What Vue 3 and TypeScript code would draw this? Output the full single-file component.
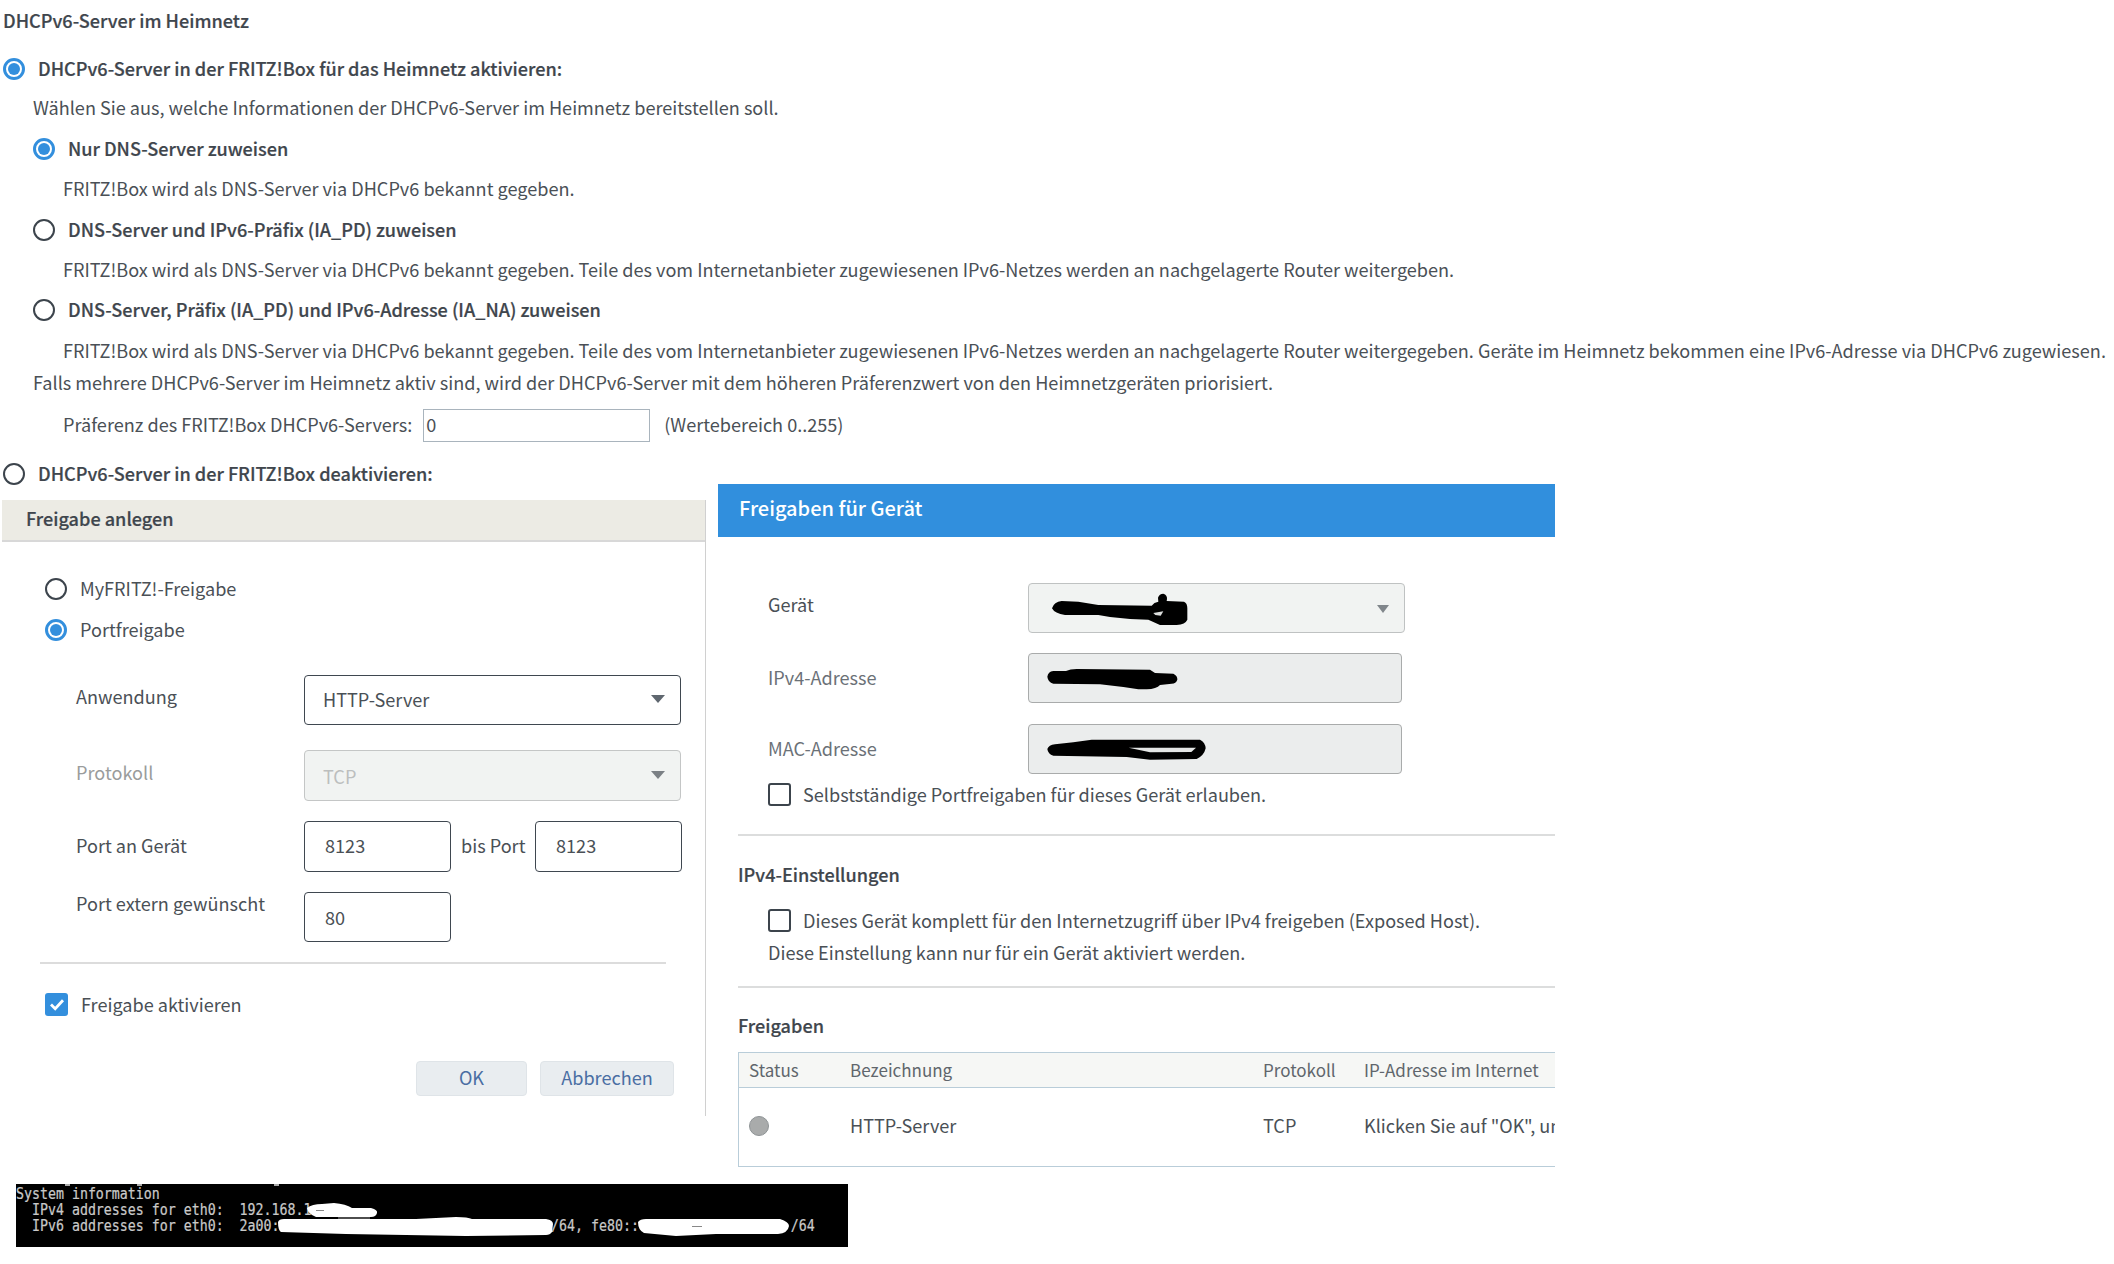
<script setup lang="ts">
const terminalLines: string[] = [
  'System information',
  '  IPv4 addresses for eth0:  192.168.1',
  '  IPv6 addresses for eth0:  2a00:' + ' '.repeat(34) + '/64, fe80::' + ' '.repeat(19) + '/64',
]
</script>

<template>
  <main class="page">
    <section class="top">
      <div class="row title strong">DHCPv6-Server im Heimnetz</div>
      <label class="row g23 strong"><span class="radio on"></span><span class="lbl">DHCPv6-Server in der FRITZ!Box für das Heimnetz aktivieren:</span></label>
      <div class="row g15 i1">Wählen Sie aus, welche Informationen der DHCPv6-Server im Heimnetz bereitstellen soll.</div>
      <label class="row g17 i1 strong"><span class="radio on"></span><span class="lbl">Nur DNS-Server zuweisen</span></label>
      <div class="row g16 i2">FRITZ!Box wird als DNS-Server via DHCPv6 bekannt gegeben.</div>
      <label class="row g17 i1 strong"><span class="radio"></span><span class="lbl">DNS-Server und IPv6-Präfix (IA_PD) zuweisen</span></label>
      <div class="row g16 i2">FRITZ!Box wird als DNS-Server via DHCPv6 bekannt gegeben. Teile des vom Internetanbieter zugewiesenen IPv6-Netzes werden an nachgelagerte Router weitergeben.</div>
      <label class="row g16 i1 strong"><span class="radio"></span><span class="lbl">DNS-Server, Präfix (IA_PD) und IPv6-Adresse (IA_NA) zuweisen</span></label>
      <div class="row g17 i2">FRITZ!Box wird als DNS-Server via DHCPv6 bekannt gegeben. Teile des vom Internetanbieter zugewiesenen IPv6-Netzes werden an nachgelagerte Router weitergegeben. Geräte im Heimnetz bekommen eine IPv6-Adresse via DHCPv6 zugewiesen.</div>
      <div class="row g8 i1">Falls mehrere DHCPv6-Server im Heimnetz aktiv sind, wird der DHCPv6-Server mit dem höheren Präferenzwert von den Heimnetzgeräten priorisiert.</div>
      <div class="row g18 i2 pref">
        <span class="pref-text">Präferenz des FRITZ!Box DHCPv6-Servers:</span>
        <span class="pref-input">0</span>
        <span class="pref-text">(Wertebereich 0..255)</span>
      </div>
      <label class="row g25 strong"><span class="radio"></span><span class="lbl">DHCPv6-Server in der FRITZ!Box deaktivieren:</span></label>
    </section>

    <section class="panels">
      <div class="left">
        <header class="left-head strong">Freigabe anlegen</header>
        <div class="left-body">
          <label class="row opt"><span class="radio"></span><span class="lbl">MyFRITZ!-Freigabe</span></label>
          <label class="row opt opt2"><span class="radio on"></span><span class="lbl">Portfreigabe</span></label>

          <div class="form-row r-app">
            <span class="flabel up4">Anwendung</span>
            <div class="box wide"><span>HTTP-Server</span><i class="caret"></i></div>
          </div>
          <div class="form-row r-proto">
            <span class="flabel up4 muted">Protokoll</span>
            <div class="box wide tall disabled"><span class="tcp">TCP</span><i class="caret"></i></div>
          </div>
          <div class="form-row r-port">
            <span class="flabel up2">Port an Gerät</span>
            <div class="box small">8123</div>
            <span class="bis">bis Port</span>
            <div class="box small">8123</div>
          </div>
          <div class="form-row r-ext">
            <span class="flabel up14">Port extern gewünscht</span>
            <div class="box small ext">80</div>
          </div>

          <div class="hr"></div>

          <label class="row opt activate"><span class="check on"><svg viewBox="0 0 22 22" width="22" height="22"><path d="M5 11.5l4.2 4.2L17 7.2" fill="none" stroke="#fff" stroke-width="2.8" /></svg></span><span class="lbl">Freigabe aktivieren</span></label>

          <div class="buttons">
            <button class="btn ok" type="button">OK</button>
            <button class="btn cancel" type="button">Abbrechen</button>
          </div>
        </div>
      </div>

      <div class="right">
        <header class="right-head">Freigaben für Gerät</header>

        <div class="dev-row d1">
          <span class="dlabel">Gerät</span>
          <div class="dbox sel"><i class="caret"></i></div>
        </div>
        <div class="dev-row d2">
          <span class="dlabel grey">IPv4-Adresse</span>
          <div class="dbox ro"></div>
        </div>
        <div class="dev-row d3">
          <span class="dlabel grey">MAC-Adresse</span>
          <div class="dbox ro"></div>
        </div>
        <label class="row chk c1"><span class="check"></span><span class="clbl">Selbstständige Portfreigaben für dieses Gerät erlauben.</span></label>

        <div class="rhr hr1"></div>
        <div class="row sect s1 strong">IPv4-Einstellungen</div>
        <label class="row chk c2"><span class="check"></span><span class="clbl">Dieses Gerät komplett für den Internetzugriff über IPv4 freigeben (Exposed Host).</span></label>
        <div class="row note">Diese Einstellung kann nur für ein Gerät aktiviert werden.</div>
        <div class="rhr hr2"></div>
        <div class="row sect s2 strong">Freigaben</div>

        <div class="table">
          <div class="thead">
            <span class="c-status">Status</span>
            <span class="c-name">Bezeichnung</span>
            <span class="c-proto">Protokoll</span>
            <span class="c-ip">IP-Adresse im Internet</span>
          </div>
          <div class="tbody">
            <span class="c-status"><i class="led"></i></span>
            <span class="c-name">HTTP-Server</span>
            <span class="c-proto">TCP</span>
            <span class="c-ip">Klicken Sie auf "OK", um die Freigabe zu aktivieren</span>
          </div>
        </div>

        <svg class="scribbles" viewBox="0 0 690 570" width="230" height="190" aria-hidden="true">
          <path d="M66 70 Q72 50 95 48 L145 50 L205 60 L365 62 Q372 52 385 50 L384 38 Q388 26 400 26 Q412 30 411 42 L410 48 L462 50 Q472 54 472 70 L472 104 Q466 118 440 120 L390 120 L355 104 L300 102 L240 96 L205 90 L105 90 Q74 86 66 70Z" fill="#000" />
          <path d="M370 84 L400 79 L392 92 L376 90Z" fill="#dcdedd" />
          <path d="M52 275 Q54 260 70 258 L108 258 Q120 252 140 252 L360 254 L375 264 L430 266 Q443 272 442 284 Q438 296 425 296 L390 300 Q380 312 350 313 L325 313 L280 306 L210 298 L70 296 Q54 292 52 275Z" fill="#000" />
          <path d="M52 492 Q56 480 75 478 L130 472 L185 464 L510 464 Q526 472 527 490 Q522 512 500 522 L360 524 L290 516 L70 512 Q54 508 52 492Z" fill="#000" />
          <path d="M296 488 L498 488 L484 501 L360 502Z" fill="#e4e6e5" />
        </svg>
      </div>
    </section>

    <section class="terminal">
      <div class="term-top" v-for="x in [49, 121, 258]" :key="x" :class="'tick' + x"></div>
      <pre class="term-text"><template v-for="line in terminalLines" :key="line">{{ line }}
</template></pre>
      <svg class="blobs" viewBox="0 0 832 63" width="832" height="63" aria-hidden="true">
        <path d="M291 24 Q296 20 306 20 L318 19 Q330 20 336 24 L355 24 Q362 26 361 29 Q360 33 355 33 L300 33 Q292 30 291 24Z" fill="#fff" />
        <path d="M262 38 Q263 35 268 35 L400 35 L440 33 Q452 33 456 35 L530 35 Q537 36 537 40 L536 48 Q534 51 530 51 L450 52 L330 50 L265 48 Q262 46 262 38Z" fill="#fff" />
        <path d="M622 38 Q624 35 630 35 L764 35 Q773 38 773 42 Q772 49 762 50 L700 50 L660 52 L628 49 Q622 46 622 38Z" fill="#fff" />
        <path d="M676 42 L686 42 L686 43 L676 43Z" fill="#888" />
        <path d="M300 26 L308 26 L308 27 L300 27Z" fill="#888" />
        <path d="M322 34 L354 34" stroke="#999" fill="none" />
      </svg>
    </section>
  </main>
</template>

<style>
html, body { margin: 0; background: #fff; }
</style>

<style scoped>
.page {
  width: 2114px;
  height: 1264px;
  overflow: hidden;
  background: #fff;
  color: #4a5056;
  font-family: "Noto Sans CJK SC", "Noto Sans", sans-serif;
  font-size: 18.1px;
  line-height: 24px;
}
.top { padding: 9px 0 0 3px; height: 475px; box-sizing: content-box; }
.row { display: flex; align-items: center; height: 24px; box-sizing: border-box; padding-bottom: 2px; white-space: nowrap; }
.strong { font-weight: 500; color: #3f464d; -webkit-text-stroke: 0.2px #3f464d; }
.title + .row { margin-top: 24px; }
.g8 { margin-top: 8px; } .g15 { margin-top: 15px; } .g16 { margin-top: 16px; }
.g17 { margin-top: 17px; } .g18 { margin-top: 18px; } .g25 { margin-top: 25px; }
.i1 { padding-left: 30px; }
.i2 { padding-left: 60px; }
.lbl { margin-left: 13px; }

.radio {
  position: relative;
  top: 1px;
  flex: none;
  width: 22px;
  height: 22px;
  box-sizing: border-box;
  border: 2px solid #3c444c;
  border-radius: 50%;
  background: #fff;
}
.radio.on { border: 3px solid #338fdd; }
.radio.on::after {
  content: "";
  position: absolute;
  left: 2px;
  top: 2px;
  width: 12px;
  height: 12px;
  border-radius: 50%;
  background: #338fdd;
}
.check {
  position: relative;
  top: 1px;
  flex: none;
  width: 23px;
  height: 23px;
  box-sizing: border-box;
  border: 2px solid #3c444c;
  border-radius: 3px;
  display: block;
}
.check.on { border: 0; background: #338fdd; }
.check svg { display: block; margin: 0 auto; }

.pref { padding-bottom: 0; }
.pref-text { position: relative; top: -1px; }
.pref-input {
  width: 227px;
  height: 33px;
  box-sizing: border-box;
  margin-left: 11px;
  margin-right: 14px;
  padding-left: 2px;
  border: 1px solid #a9b4bd;
  line-height: 29px;
}

.panels { display: flex; align-items: flex-start; padding-left: 2px; }
.left { width: 703px; margin-top: 16px; height: 616px; border-right: 1px solid #d0d0d0; flex: none; }
.left-head {
  height: 40px;
  line-height: 37px;
  padding-left: 24px;
  background: #ecebe4;
  border-bottom: 2px solid #d8d8d8;
}
.left-body { padding: 35px 0 0 43px; }
.opt { height: 23px; }
.opt .lbl { margin-left: 13px; }
.opt2 { margin-top: 18px; }

.form-row { display: flex; align-items: center; }
.flabel { width: 259px; padding-left: 31px; flex: none; box-sizing: border-box; position: relative; }
.up2 { top: -2px; }
.up4 { top: -4px; }
.up14 { top: -14px; }
.muted { color: #9a9c9c; }
.r-app { margin-top: 34px; }
.r-proto { margin-top: 25px; }
.r-port { margin-top: 20px; }
.r-ext { margin-top: 20px; }
.box {
  position: relative;
  display: flex;
  align-items: center;
  flex: none;
  box-sizing: border-box;
  height: 51px;
  padding-left: 18px;
  padding-bottom: 4px;
  border: 1.5px solid #3f4750;
  border-radius: 4px;
  background: #fff;
}
.wide { width: 377px; height: 50px; padding-left: 18px; padding-bottom: 3px; }
.tall { height: 51px; }
.small { width: 147px; padding-left: 20px; }
.ext { height: 50px; padding-bottom: 1px; }
.disabled { background: #f1f3f2; border-color: #c4c6c6; }
.tcp { color: #bcbebe; padding-top: 3px; }
.bis { margin: 0 10px 0 10px; width: 64px; flex: none; white-space: nowrap; position: relative; top: -2px; }
.caret {
  position: absolute;
  right: 15px;
  top: 50%;
  margin-top: -5px;
  width: 0;
  height: 0;
  border-left: 7px solid transparent;
  border-right: 7px solid transparent;
  border-top: 8px solid #5f676f;
}
.disabled .caret { border-top-color: #7b8085; }

.hr { margin: 20px 0 0 -5px; width: 626px; height: 2px; background: #dcdcdc; }
.activate { margin-top: 29px; height: 23px; }
.buttons { display: flex; gap: 13px; margin: 45px 0 0 371px; }
.btn {
  height: 35px;
  box-sizing: border-box;
  border: 1px solid #dfe4e8;
  border-radius: 4px;
  background: #e9edf0;
  color: #4a6ea3;
  font: inherit;
  padding: 0 0 3px;
}
.ok { width: 111px; }
.cancel { width: 134px; }

.right { position: relative; margin-left: 12px; width: 837px; flex: none; height: 700px; }
.right-head {
  height: 53px;
  line-height: 48px;
  padding-left: 21px;
  background: #318fdd;
  color: #fff;
  font-size: 20px;
  font-weight: 500;
}
.dev-row { display: flex; align-items: center; padding-left: 50px; }
.dlabel { width: 260px; flex: none; position: relative; top: -4px; }
.grey { color: #6b7177; top: -1px; }
.dbox { position: relative; box-sizing: border-box; height: 50px; border-radius: 4px; }
.sel { width: 377px; background: #f1f3f2; border: 1.5px solid #bfc2c2; }
.sel .caret { right: 15px; margin-top: -3px; border-top-color: #80868b; border-left-width: 6.5px; border-right-width: 6.5px; }
.ro { width: 374px; background: #ebeded; border: 1.5px solid #a9abab; }
.d1 { margin-top: 46px; }
.d2 { margin-top: 20px; }
.d3 { margin-top: 21px; }
.chk { padding-left: 50px; }
.clbl { margin-left: 12px; }
.c1 { margin-top: 9px; height: 23px; }
.rhr { margin-left: 20px; height: 2px; background: #dcdddd; }
.hr1 { margin-top: 28px; }
.sect { padding-left: 20px; }
.s1 { margin-top: 27px; }
.c2 { margin-top: 22px; height: 23px; }
.note { padding-left: 50px; margin-top: 9px; }
.hr2 { margin-top: 21px; }
.s2 { margin-top: 26px; }

.table {
  margin: 14px 0 0 20px;
  height: 115px;
  overflow: hidden;
  border-top: 1px solid #b9cdd9;
  border-bottom: 1px solid #b9cdd9;
  border-left: 1px solid #b9cdd9;
  box-sizing: border-box;
}
.thead, .tbody { position: relative; display: grid; grid-template-columns: 101px 413px 101px 400px; padding-left: 10px; align-items: center; white-space: nowrap; }
.thead { height: 35px; box-sizing: border-box; padding-bottom: 1px; background: #f6f7f5; border-bottom: 1px solid #b9cdd9; color: #60666c; font-size: 17px; }
.tbody { height: 77px; box-sizing: border-box; padding-bottom: 2px; }
.c-name, .c-proto, .c-ip { position: relative; }
.tbody .c-name, .tbody .c-proto, .tbody .c-ip { top: -1px; }
.led {
  display: block;
  width: 20px;
  height: 20px;
  box-sizing: border-box;
  border: 1px solid #8f9496;
  border-radius: 50%;
  background: #a9abab;
}
.scribbles { position: absolute; left: 312px; top: 101px; pointer-events: none; }

.terminal {
  position: relative;
  margin: 0 0 0 16px;
  width: 832px;
  height: 63px;
  overflow: hidden;
  background: #000;
}
.term-text {
  margin: 0;
  padding-top: 2px;
  color: #c9c9c9;
  font-family: "DejaVu Sans Mono", "Liberation Mono", monospace;
  font-size: 13.28px;
  line-height: 14px;
  white-space: pre;
  transform: scaleY(1.143);
  transform-origin: top left;
  -webkit-text-stroke: 0.2px #c9c9c9;
}
.term-top { position: absolute; top: 0; width: 5px; height: 2px; background: #aaa; }
.tick49 { left: 49px; }
.tick121 { left: 121px; }
.tick258 { left: 258px; }
.blobs { position: absolute; left: 0; top: 0; }
</style>
